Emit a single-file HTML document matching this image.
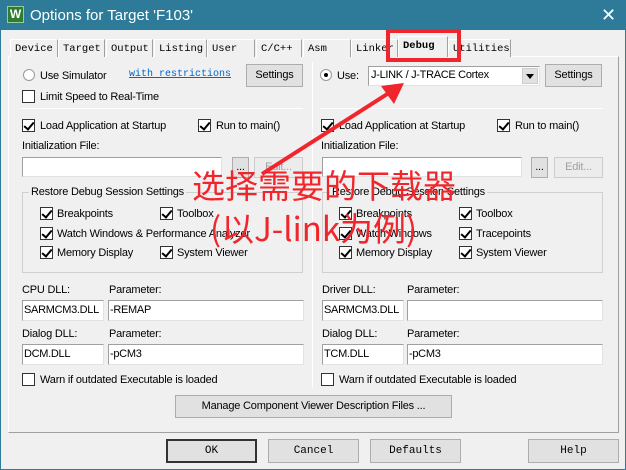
<!DOCTYPE html>
<html><head><meta charset="utf-8"><style>
*{margin:0;padding:0;box-sizing:border-box}
body{width:626px;height:470px;overflow:hidden;background:#2d7b99;font-family:"Liberation Sans","Noto Sans CJK SC",sans-serif;font-size:11px;color:#000;position:relative}
.a{position:absolute}
.win{left:1px;top:30px;width:624px;height:439px;background:#f0f0f0}
.t{white-space:nowrap;line-height:14px;letter-spacing:-0.2px}
.tab{position:absolute;top:39px;height:18px;border:1px solid #fff;border-right:1px solid #a0a0a0;border-bottom:none;background:#f0f0f0;font-family:"Liberation Mono",monospace;font-size:10.5px;padding:3px 0 0 4px;white-space:nowrap}
.panel{left:8px;top:56px;width:611px;height:377px;border:1px solid #fff;border-right-color:#a0a0a0;border-bottom-color:#a0a0a0}
.btn{position:absolute;background:#e1e1e1;border:1px solid #adadad;text-align:center;white-space:nowrap;letter-spacing:-0.2px}
.in{position:absolute;background:#fff;border:1px solid #a0a0a0;border-right-color:#e3e3e3;border-bottom-color:#e3e3e3;padding:3px 1px;white-space:nowrap;overflow:hidden;letter-spacing:-0.3px}
.cb{position:absolute;width:13px;height:13px;background:#fff;border:1px solid #333;}
.cb.k::after{content:"";position:absolute;left:3px;top:0px;width:4px;height:8px;border:solid #000;border-width:0 2px 2px 0;transform:rotate(40deg)}
.rb{position:absolute;width:12px;height:12px;border-radius:50%;background:#fff;border:1px solid #999}
.rb.k::after{content:"";position:absolute;left:3px;top:3px;width:4px;height:4px;border-radius:50%;background:#000}
.grp{position:absolute;border:1px solid #d0d0d0}
.gl{position:absolute;background:#f0f0f0;padding:0 2px;white-space:nowrap}
.db{font-family:"Liberation Mono",monospace;letter-spacing:0}
.red{color:#f0262c;font-family:"Noto Sans CJK SC",sans-serif;white-space:nowrap;font-weight:400}
</style></head><body>
<div class="a" style="left:7px;top:6px;width:17px;height:17px;background:#2e7d32;border:1px solid #9c9;color:#fff;font-size:12px;font-weight:bold;text-align:center;line-height:15px">W</div>
<div class="a" style="left:30px;top:7px;color:#fff;font-size:15px;line-height:17px;white-space:nowrap">Options for Target 'F103'</div>
<div class="a" style="left:601px;top:6px;color:#fff;font-size:18px;line-height:18px">✕</div>
<div class="a win"></div>
<div class="a panel"></div>
<div class="tab" style="left:10px;width:48px">Device</div>
<div class="tab" style="left:58px;width:47px">Target</div>
<div class="tab" style="left:106px;width:47px">Output</div>
<div class="tab" style="left:154px;width:53px">Listing</div>
<div class="tab" style="left:207px;width:48px">User</div>
<div class="tab" style="left:256px;width:46px">C/C++</div>
<div class="tab" style="left:303px;width:48px">Asm</div>
<div class="tab" style="left:351px;width:47px">Linker</div>
<div class="tab" style="left:398px;top:36px;height:21px;width:50px;border-bottom:none;z-index:2;font-weight:bold">Debug</div>
<div class="tab" style="left:448px;width:63px">Utilities</div>

<div class="a" style="left:312px;top:62px;width:1px;height:326px;background:#a0a0a0;border-right:1px solid #fff"></div>

<div class="rb" style="left:23px;top:69px"></div>
<div class="a t" style="left:40px;top:69px">Use Simulator</div>
<div class="a db" style="left:129px;top:68px;color:#0066cc;text-decoration:underline;font-size:10px;white-space:nowrap;line-height:14px">with restrictions</div>
<div class="btn" style="left:246px;top:64px;width:57px;height:23px;line-height:21px">Settings</div>
<div class="cb" style="left:22px;top:90px"></div>
<div class="a t" style="left:40px;top:90px">Limit Speed to Real-Time</div>
<div class="a" style="left:21px;top:108px;width:282px;height:1px;background:#a0a0a0;border-bottom:1px solid #fff"></div>
<div class="rb k" style="left:320px;top:69px"></div>
<div class="a t" style="left:337px;top:69px">Use:</div>
<div class="in" style="left:368px;top:66px;width:172px;height:20px;padding:2px 2px">J-LINK / J-TRACE Cortex</div>
<div class="a" style="left:522px;top:68px;width:16px;height:16px;background:#e1e1e1;border:1px solid #ccc"></div>
<div class="a" style="left:526px;top:74px;width:0;height:0;border-left:4px solid transparent;border-right:4px solid transparent;border-top:5px solid #000"></div>
<div class="btn" style="left:545px;top:64px;width:57px;height:23px;line-height:21px">Settings</div>
<div class="a" style="left:320px;top:108px;width:283px;height:1px;background:#a0a0a0;border-bottom:1px solid #fff"></div>

<div class="cb k" style="left:22px;top:119px"></div>
<div class="a t" style="left:40px;top:119px">Load Application at Startup</div>
<div class="cb k" style="left:198px;top:119px"></div>
<div class="a t" style="left:216px;top:119px">Run to main()</div>
<div class="a t" style="left:22px;top:139px">Initialization File:</div>
<div class="in" style="left:22px;top:157px;width:200px;height:20px"></div>
<div class="btn" style="left:232px;top:157px;width:17px;height:21px;line-height:18px">...</div>
<div class="btn" style="left:254px;top:157px;width:49px;height:21px;line-height:19px;color:#a0a0a0;background:#ececec;border-color:#ccc">Edit...</div>
<div class="cb k" style="left:321px;top:119px"></div>
<div class="a t" style="left:339px;top:119px">Load Application at Startup</div>
<div class="cb k" style="left:497px;top:119px"></div>
<div class="a t" style="left:515px;top:119px">Run to main()</div>
<div class="a t" style="left:321px;top:139px">Initialization File:</div>
<div class="in" style="left:322px;top:157px;width:200px;height:20px"></div>
<div class="btn" style="left:531px;top:157px;width:17px;height:21px;line-height:18px">...</div>
<div class="btn" style="left:554px;top:157px;width:49px;height:21px;line-height:19px;color:#a0a0a0;background:#ececec;border-color:#ccc">Edit...</div>

<div class="grp" style="left:22px;top:192px;width:281px;height:81px"></div>
<div class="gl t" style="left:29px;top:185px">Restore Debug Session Settings</div>
<div class="cb k" style="left:40px;top:207px"></div><div class="a t" style="left:57px;top:207px">Breakpoints</div>
<div class="cb k" style="left:160px;top:207px"></div><div class="a t" style="left:177px;top:207px">Toolbox</div>
<div class="cb k" style="left:40px;top:227px"></div><div class="a t" style="left:57px;top:227px">Watch Windows &amp; Performance Analyzer</div>
<div class="cb k" style="left:40px;top:246px"></div><div class="a t" style="left:57px;top:246px">Memory Display</div>
<div class="cb k" style="left:160px;top:246px"></div><div class="a t" style="left:177px;top:246px">System Viewer</div>

<div class="grp" style="left:322px;top:192px;width:281px;height:81px"></div>
<div class="gl t" style="left:330px;top:185px">Restore Debug Session Settings</div>
<div class="cb k" style="left:339px;top:207px"></div><div class="a t" style="left:356px;top:207px">Breakpoints</div>
<div class="cb k" style="left:459px;top:207px"></div><div class="a t" style="left:476px;top:207px">Toolbox</div>
<div class="cb k" style="left:339px;top:227px"></div><div class="a t" style="left:356px;top:227px">Watch Windows</div>
<div class="cb k" style="left:459px;top:227px"></div><div class="a t" style="left:476px;top:227px">Tracepoints</div>
<div class="cb k" style="left:339px;top:246px"></div><div class="a t" style="left:356px;top:246px">Memory Display</div>
<div class="cb k" style="left:459px;top:246px"></div><div class="a t" style="left:476px;top:246px">System Viewer</div>

<div class="a t" style="left:22px;top:283px">CPU DLL:</div><div class="a t" style="left:109px;top:283px">Parameter:</div>
<div class="in" style="left:22px;top:300px;width:82px;height:21px">SARMCM3.DLL</div>
<div class="in" style="left:108px;top:300px;width:196px;height:21px">-REMAP</div>
<div class="a t" style="left:22px;top:327px">Dialog DLL:</div><div class="a t" style="left:109px;top:327px">Parameter:</div>
<div class="in" style="left:22px;top:344px;width:82px;height:21px">DCM.DLL</div>
<div class="in" style="left:108px;top:344px;width:196px;height:21px">-pCM3</div>
<div class="cb" style="left:22px;top:373px"></div><div class="a t" style="left:40px;top:373px">Warn if outdated Executable is loaded</div>

<div class="a t" style="left:322px;top:283px">Driver DLL:</div><div class="a t" style="left:407px;top:283px">Parameter:</div>
<div class="in" style="left:322px;top:300px;width:82px;height:21px">SARMCM3.DLL</div>
<div class="in" style="left:407px;top:300px;width:196px;height:21px"></div>
<div class="a t" style="left:322px;top:327px">Dialog DLL:</div><div class="a t" style="left:407px;top:327px">Parameter:</div>
<div class="in" style="left:322px;top:344px;width:82px;height:21px">TCM.DLL</div>
<div class="in" style="left:407px;top:344px;width:196px;height:21px">-pCM3</div>
<div class="cb" style="left:321px;top:373px"></div><div class="a t" style="left:339px;top:373px">Warn if outdated Executable is loaded</div>

<div class="btn" style="left:175px;top:395px;width:277px;height:23px;line-height:21px">Manage Component Viewer Description Files ...</div>

<div class="btn db" style="left:166px;top:439px;width:91px;height:24px;line-height:21px;border:2px solid #333">OK</div>
<div class="btn db" style="left:268px;top:439px;width:91px;height:24px;line-height:22px">Cancel</div>
<div class="btn db" style="left:370px;top:439px;width:91px;height:24px;line-height:22px">Defaults</div>
<div class="btn db" style="left:528px;top:439px;width:91px;height:24px;line-height:22px">Help</div>

<div class="a" style="left:386px;top:29px;width:75px;height:33px;border:4px solid #f0262c;z-index:3"></div>
<svg class="a" style="left:0;top:0;z-index:3" width="626" height="470"><line x1="262" y1="174" x2="392" y2="91" stroke="#f0262c" stroke-width="4"/><polygon points="404,83 381,86 394,104" fill="#f0262c"/></svg>
<div class="a red" style="left:192px;top:162px;font-size:33px;line-height:44px;z-index:3">选择需要的下载器</div>
<div class="a red" style="left:210px;top:205px;font-size:33px;line-height:44px;z-index:3">(以J-link为例)</div>
</body></html>
